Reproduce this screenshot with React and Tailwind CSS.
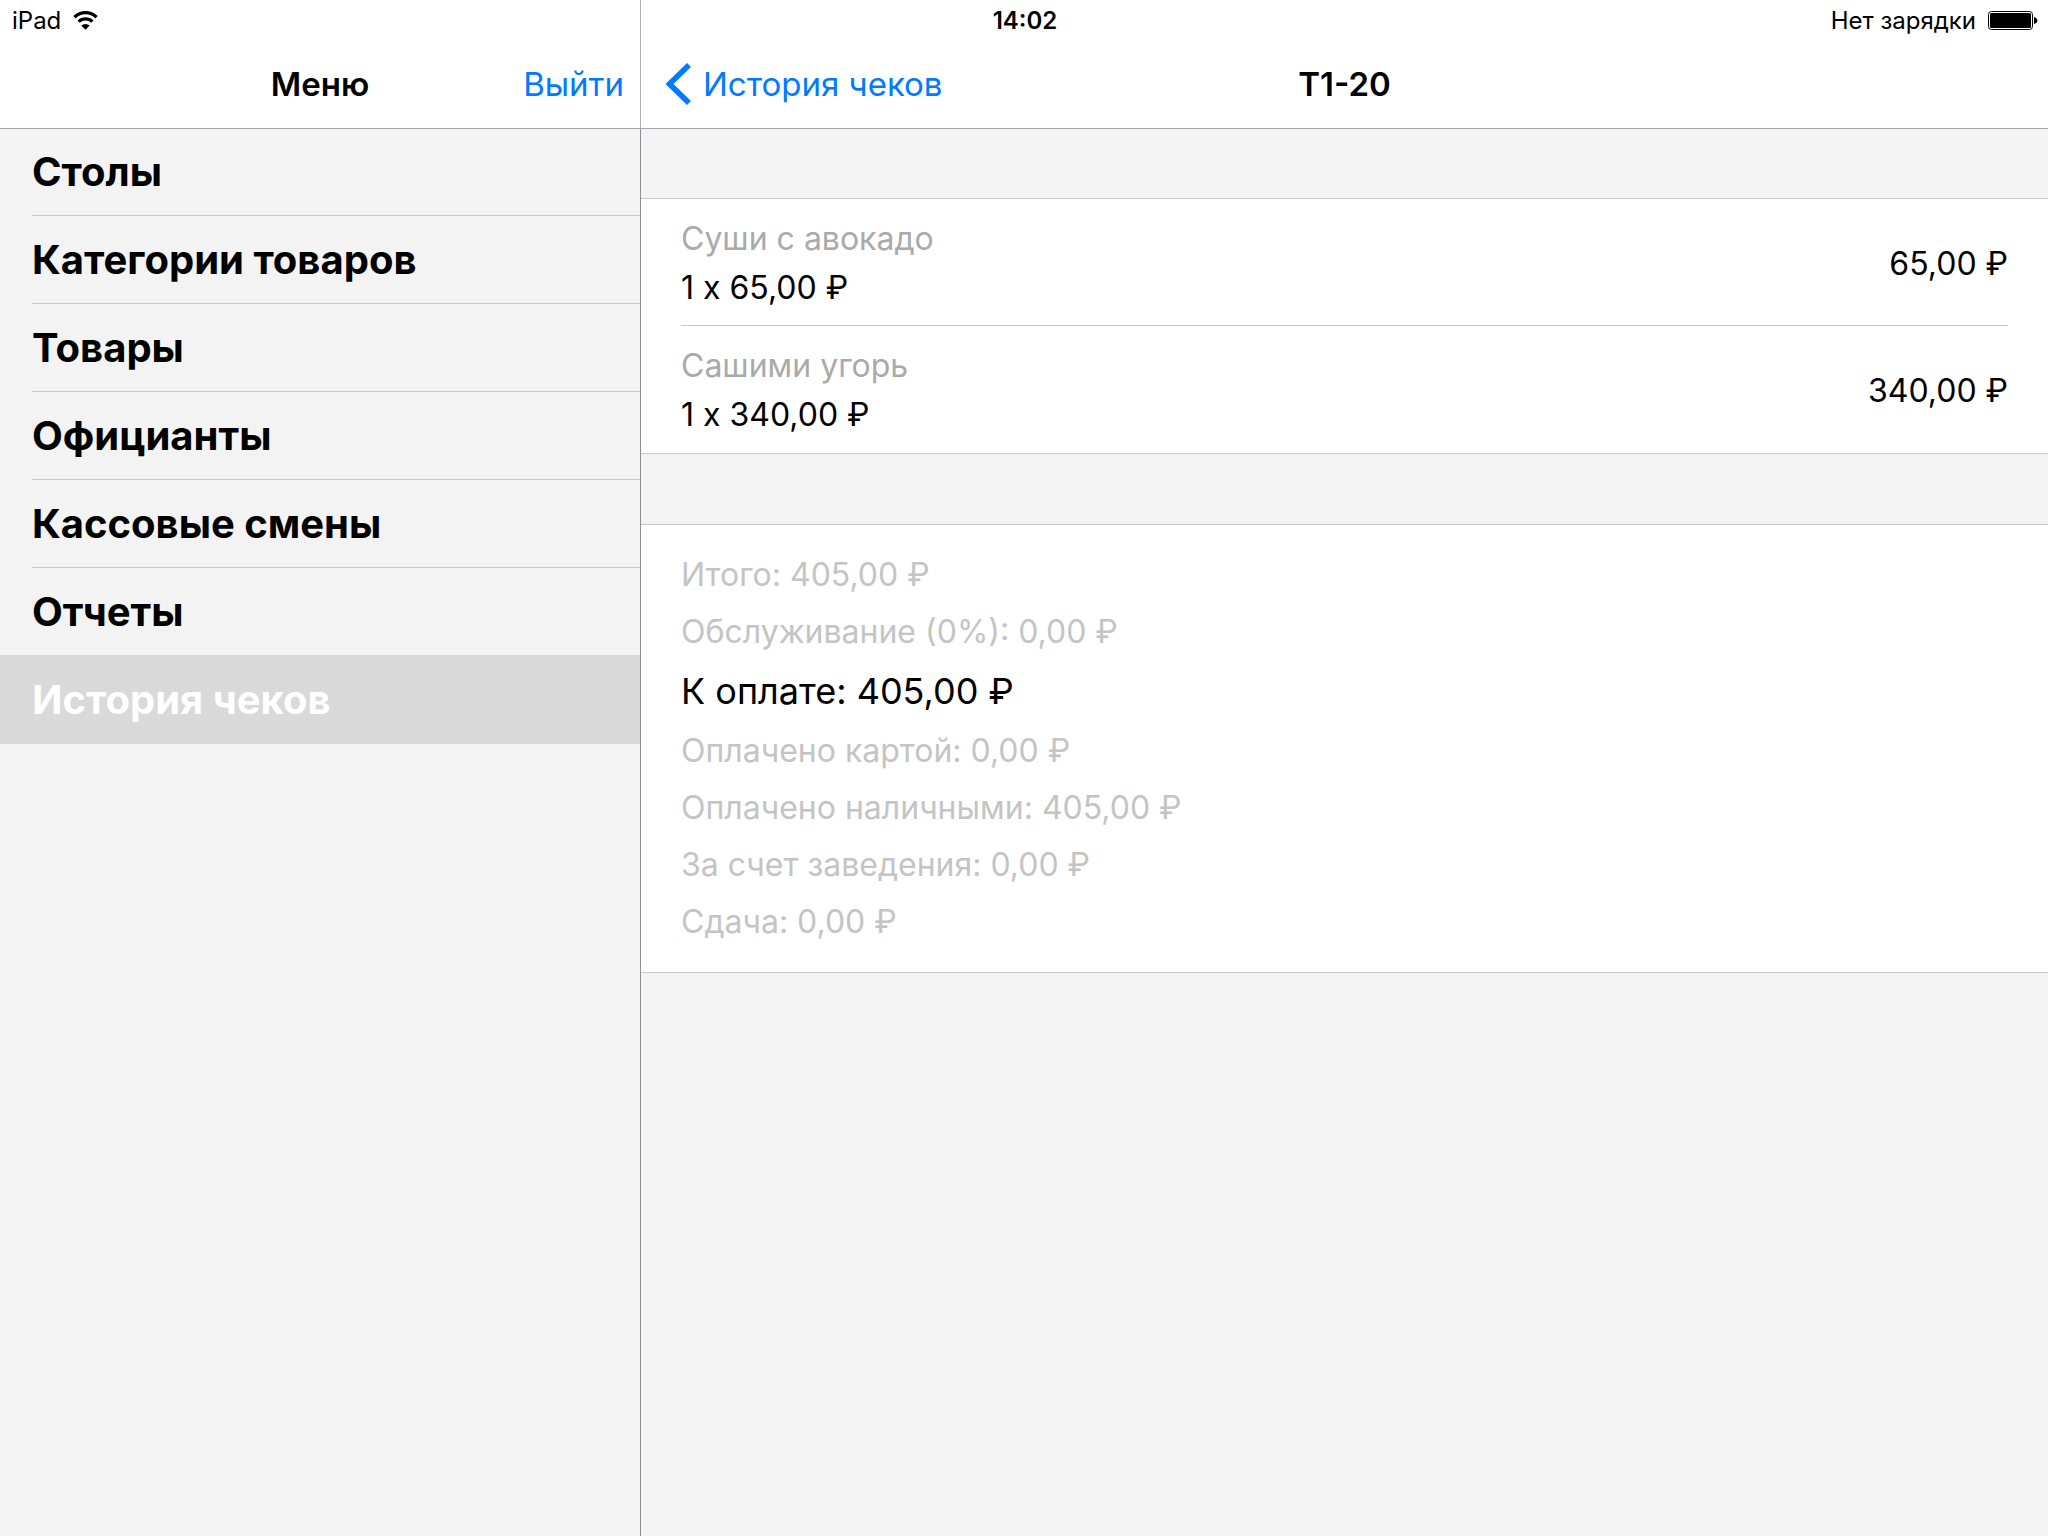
import React, { useState } from "react";

const menu = [
  "Столы",
  "Категории товаров",
  "Товары",
  "Официанты",
  "Кассовые смены",
  "Отчеты",
  "История чеков",
];

const items = [
  { name: "Суши с авокадо", quantity: "1 x 65,00 ₽", total: "65,00 ₽" },
  { name: "Сашими угорь", quantity: "1 x 340,00 ₽", total: "340,00 ₽" },
];

const summary = [
  { text: "Итого: 405,00 ₽" },
  { text: "Обслуживание (0%): 0,00 ₽" },
  { text: "К оплате: 405,00 ₽", main: true },
  { text: "Оплачено картой: 0,00 ₽" },
  { text: "Оплачено наличными: 405,00 ₽" },
  { text: "За счет заведения: 0,00 ₽" },
  { text: "Сдача: 0,00 ₽" },
];

function WifiIcon() {
  return (
    <svg width="25" height="20" viewBox="0 0 25 20" fill="none" aria-hidden="true">
      <path d="M1.5 6.2a15.6 15.6 0 0 1 22 0" stroke="#000" strokeWidth="3.4" />
      <path d="M5.6 10.7a9.8 9.8 0 0 1 13.8 0" stroke="#000" strokeWidth="3.2" />
      <path d="M12.5 18.8 8.3 14.6a6 6 0 0 1 8.4 0z" fill="#000" />
    </svg>
  );
}

function BatteryIcon() {
  return (
    <svg width="50" height="20" viewBox="0 0 50 20" fill="none" aria-hidden="true">
      <rect x="0.5" y="0.5" width="44" height="18" rx="3" stroke="#000" />
      <rect x="2" y="2" width="41" height="15" rx="1.5" fill="#000" />
      <path d="M46 6c2 .4 3.4 1.8 3.4 3.5S48 12.6 46 13z" fill="#000" />
    </svg>
  );
}

function StatusBar() {
  return (
    <div className="absolute inset-x-0 top-0 grid h-[42px] grid-cols-3 items-center pr-[10px] pl-3 text-[24px]">
      <div className="flex items-center gap-3">
        <span>iPad</span>
        <WifiIcon />
      </div>
      <span className="text-center font-semibold">14:02</span>
      <div className="flex items-center justify-end gap-3">
        <span>Нет зарядки</span>
        <BatteryIcon />
      </div>
    </div>
  );
}

function Sidebar() {
  const [active, setActive] = useState("История чеков");

  return (
    <aside className="flex w-[640px] shrink-0 flex-col">
      <header className="grid h-[129px] grid-cols-[1fr_auto_1fr] items-center border-b border-[#a7a7aa] bg-white px-4 pt-[42px] text-[33px]">
        <h1 className="col-start-2 font-semibold">Меню</h1>
        <button type="button" className="justify-self-end text-[#007aff]">
          Выйти
        </button>
      </header>

      <nav className="-mt-px">
        {menu.map((label) => (
          <button
            key={label}
            type="button"
            onClick={() => setActive(label)}
            className={`flex h-[88px] w-full pl-8 text-left text-[40px] font-bold ${
              label === active
                ? "relative bg-[#d9d9d9] text-white shadow-[0_-1px_0_#d9d9d9]"
                : "text-black"
            }`}
          >
            <span
              className={`flex flex-1 items-center self-stretch border-b ${
                label === active ? "border-transparent" : "border-[#c8c7cc]"
              }`}
            >
              {label}
            </span>
          </button>
        ))}
      </nav>
    </aside>
  );
}

function Receipt() {
  return (
    <main className="flex min-w-0 flex-1 flex-col">
      <header className="grid h-[129px] grid-cols-[1fr_auto_1fr] items-center border-b border-l border-b-[#a7a7aa] border-l-[#b2b2b7] bg-white px-6 pt-[42px] text-[33px]">
        <a href="#history" className="flex items-center gap-3 text-[#007aff]">
          <svg width="26" height="44" viewBox="0 0 26 44" fill="none" aria-hidden="true">
            <path d="M24 2 4.5 21 24 40" stroke="currentColor" strokeWidth="5.6" />
          </svg>
          История чеков
        </a>
        <h2 className="font-semibold">T1-20</h2>
      </header>

      <div className="flex-1 border-l border-[#8e8e93] pt-[69px]">
        <ul className="border-y border-[#c8c7cc] bg-white px-10 text-[32px] leading-[49px]">
          {items.map((item) => (
            <li
              key={item.name}
              className="flex items-center justify-between border-b border-[#c8c7cc] pt-[15px] pb-[13px] last:border-transparent"
            >
              <div>
                <p className="text-[#aaaaaa]">{item.name}</p>
                {/* calt would turn the x between digits into a multiplication sign */}
                <p className="[font-feature-settings:'calt'_0]">{item.quantity}</p>
              </div>
              <span>{item.total}</span>
            </li>
          ))}
        </ul>

        <div className="mt-[70px] border-y border-[#c8c7cc] bg-white px-10 pt-[21px] pb-[22px]">
          {summary.map((row) => (
            <p
              key={row.text}
              className={
                row.main
                  ? "text-[36px] leading-[62px] text-black"
                  : "text-[32px] leading-[57px] text-[#c4c4c4]"
              }
            >
              {row.text}
            </p>
          ))}
        </div>
      </div>
    </main>
  );
}

export default function App() {
  return (
    <div className="relative flex min-h-screen bg-[#f3f3f3] font-['Inter','Liberation_Sans',sans-serif] text-black">
      <Sidebar />
      <Receipt />
      <StatusBar />
    </div>
  );
}
